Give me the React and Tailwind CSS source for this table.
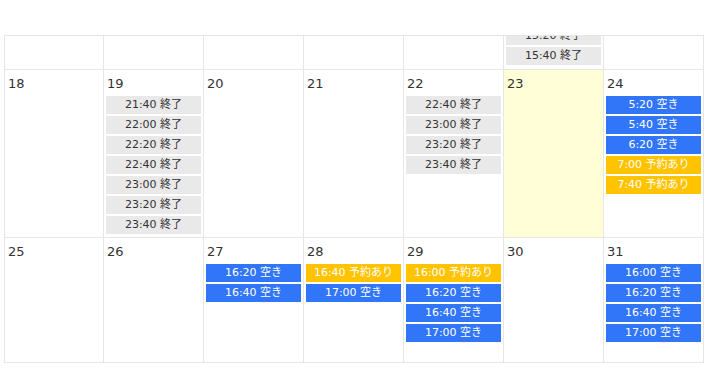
import React from "react";

const FONT = { fontFamily: '"DejaVu Sans", Verdana, "Noto Sans CJK JP", sans-serif' };

// one slot badge
function Slot({ time, status }) {
  let cls = "bg-[#e9e9e9] text-[#333]";
  if (status === "空き") cls = "bg-[#3175f8] text-white";
  if (status === "予約あり") cls = "bg-[#ffc300] text-white";
  return (
    <div className={`h-[18px] mb-[2px] text-center text-[11px] leading-[18px] whitespace-nowrap ${cls}`}>
      {time} {status}
    </div>
  );
}

const weeks = [
  {
    clipped: true,
    days: [
      { slots: [] },
      { slots: [] },
      { slots: [] },
      { slots: [] },
      { slots: [] },
      { slots: [["15:20", "終了"], ["15:40", "終了"]] },
      { slots: [] },
    ],
  },
  {
    days: [
      { d: 18, slots: [] },
      {
        d: 19,
        slots: [
          ["21:40", "終了"],
          ["22:00", "終了"],
          ["22:20", "終了"],
          ["22:40", "終了"],
          ["23:00", "終了"],
          ["23:20", "終了"],
          ["23:40", "終了"],
        ],
      },
      { d: 20, slots: [] },
      { d: 21, slots: [] },
      {
        d: 22,
        slots: [
          ["22:40", "終了"],
          ["23:00", "終了"],
          ["23:20", "終了"],
          ["23:40", "終了"],
        ],
      },
      { d: 23, today: true, slots: [] },
      {
        d: 24,
        slots: [
          ["5:20", "空き"],
          ["5:40", "空き"],
          ["6:20", "空き"],
          ["7:00", "予約あり"],
          ["7:40", "予約あり"],
        ],
      },
    ],
  },
  {
    days: [
      { d: 25, slots: [] },
      { d: 26, slots: [] },
      { d: 27, slots: [["16:20", "空き"], ["16:40", "空き"]] },
      { d: 28, slots: [["16:40", "予約あり"], ["17:00", "空き"]] },
      {
        d: 29,
        slots: [
          ["16:00", "予約あり"],
          ["16:20", "空き"],
          ["16:40", "空き"],
          ["17:00", "空き"],
        ],
      },
      { d: 30, slots: [] },
      {
        d: 31,
        slots: [
          ["16:00", "空き"],
          ["16:20", "空き"],
          ["16:40", "空き"],
          ["17:00", "空き"],
        ],
      },
    ],
  },
];

export default function App() {
  return (
    <div className="min-h-screen w-[713px] bg-white pt-[35px] pl-[4px]" style={FONT}>
      <div className="w-[700px] border-l border-t border-[#e6e6e6]">
        {weeks.map((week, wi) => (
          <div key={wi} className="grid grid-cols-[99px_repeat(6,100px)]">
            {week.days.map((day, di) => (
              <div
                key={di}
                className={
                  week.clipped
                    ? "h-[34px] overflow-hidden flex flex-col justify-end px-[2px] pb-[2px] border-r border-b border-[#e6e6e6]"
                    : `min-h-[125px] px-[2px] pt-[4px] pb-[1px] border-r border-b border-[#e6e6e6] ${
                        day.today ? "bg-[#fffed6]" : ""
                      }`
                }
              >
                {!week.clipped && (
                  <div className="h-[20px] mb-[2px] pl-[1px] text-[13px] leading-[20px] text-[#333]">{day.d}</div>
                )}
                {day.slots.map(([t, s]) => (
                  <Slot key={t} time={t} status={s} />
                ))}
              </div>
            ))}
          </div>
        ))}
      </div>
    </div>
  );
}
